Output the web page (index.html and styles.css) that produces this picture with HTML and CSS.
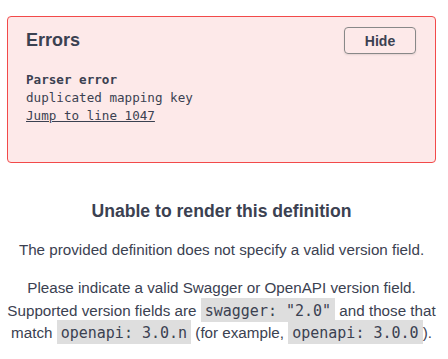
FILE: index.html
```html
<!DOCTYPE html>
<html lang="en">
<head>
    <meta charset="UTF-8">
    <meta name="viewport" content="width=device-width, initial-scale=1.0">
    <title>Swagger UI</title>
    <link rel="stylesheet" href="styles.css">
</head>
<body>
    <div class="page">
        <div class="errors-wrapper">
            <div class="errors-header">
                <h4 class="errors-title">Errors</h4>
                <button class="btn-hide">Hide</button>
            </div>
            <div class="errors">
                <div class="error-line">
                    <h4 class="error-source">Parser error</h4>
                    <span class="error-message">duplicated mapping key</span>
                    <span class="error-jump">Jump to line 1047</span>
                </div>
            </div>
        </div>

        <div class="version-pragma">
            <h3 class="version-pragma-title">Unable to render this definition</h3>
            <p>The provided definition does not specify a valid version field.</p>
            <p>Please indicate a valid Swagger or OpenAPI version field. Supported version fields are <code>swagger: "2.0"</code> and those that match <code>openapi: 3.0.n</code> (for example, <code>openapi: 3.0.0</code>).</p>
        </div>
    </div>
</body>
</html>
```

FILE: styles.css
```css
body {
    margin: 0;
    font-family: 'Liberation Sans', Arial, sans-serif;
    color: #3b4151;
    background-color: #fff;
}
.page {
    padding: 16px 12px 0 7px;
}
.errors-wrapper {
    background-color: #fde9e9;
    border: 1px solid #f24a4a;
    border-radius: 4px;
    padding: 10px 19px 37px 18px;
}
.errors-header {
    display: flex;
    justify-content: space-between;
    align-items: center;
}
.errors-title {
    margin: 0;
    font-size: 18px;
    font-weight: bold;
}
.btn-hide {
    width: 72px;
    height: 27px;
    padding: 0;
    background: transparent;
    border: 1px solid #888;
    border-radius: 4px;
    font-family: 'Liberation Sans', Arial, sans-serif;
    font-size: 14px;
    font-weight: bold;
    color: #3b4151;
    box-shadow: 0 1px 2px rgba(0,0,0,0.1);
}
.errors {
    margin-top: 17px;
    font-family: 'DejaVu Sans Mono', monospace;
    font-size: 12.6px;
    line-height: 18px;
}
.error-line {
    display: flex;
    flex-direction: column;
}
.error-source {
    margin: 0;
    font-size: 12.6px;
    font-weight: bold;
}
.error-jump {
    text-decoration: underline;
}
.version-pragma {
    text-align: center;
    padding-top: 37px;
}
.version-pragma-title {
    margin: 0 0 17px;
    font-size: 17.6px;
    font-weight: bold;
    line-height: 22px;
}
.version-pragma p {
    margin: 0 0 15.5px;
    font-size: 15.2px;
    line-height: 22.5px;
}
.version-pragma code {
    background-color: #dedede;
    padding: 4px 4px 2px;
    font-family: 'DejaVu Sans Mono', monospace;
    font-size: 15px;
    white-space: pre;
}
```
